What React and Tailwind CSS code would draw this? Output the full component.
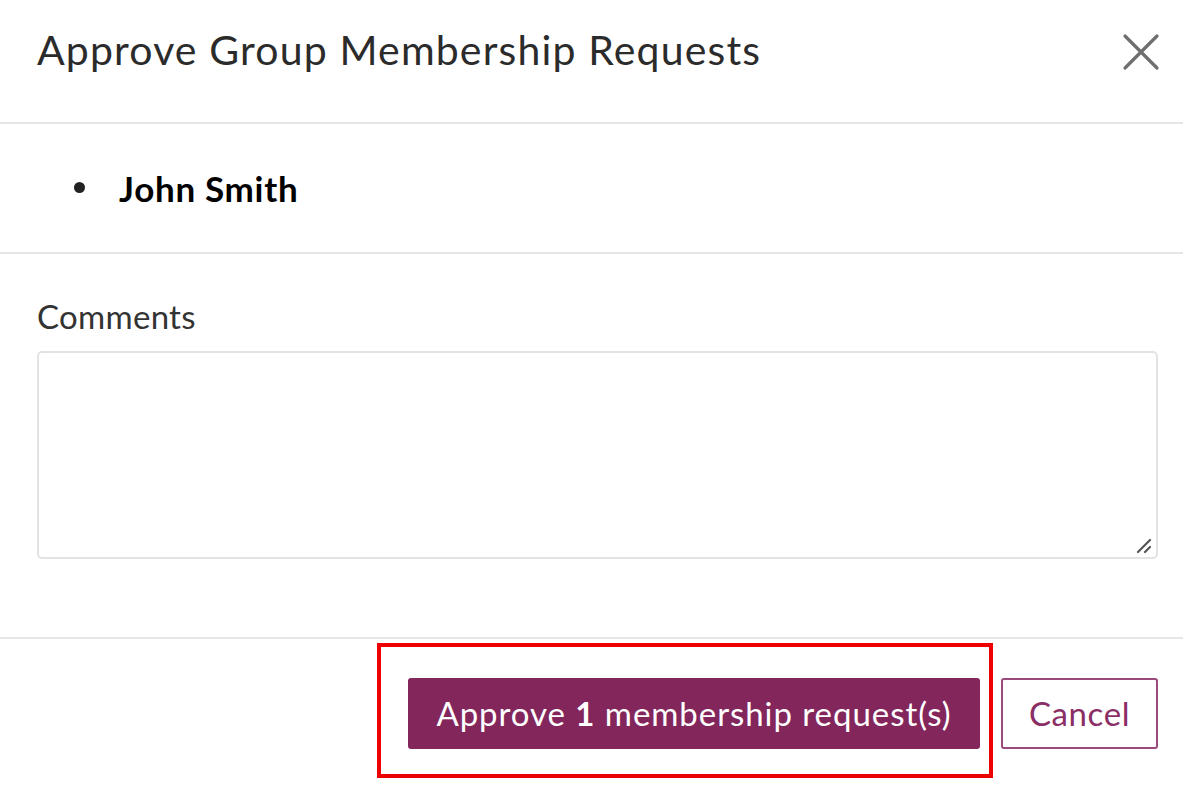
import React from "react";

const CloseIcon = () => (
  <svg width="38" height="38" viewBox="0 0 38 38" fill="none">
    <path d="M3 3 L35 35 M35 3 L3 35" stroke="#6e6e6e" strokeWidth="3.2" strokeLinecap="round" />
  </svg>
);

const ResizeHandle = () => (
  <svg width="16" height="16" viewBox="0 0 16 16" className="absolute right-[4px] bottom-[3px]">
    <path d="M2 14 L14 2 M9 14 L14 9" stroke="#555" strokeWidth="2.2" strokeLinecap="round" />
  </svg>
);

const App = () => {
  return (
    <div className="w-[1195px] h-[807px] bg-white overflow-hidden font-['Lato','Open_Sans',sans-serif] text-[#333]">
      {/* Header */}
      <div className="h-[124px] mr-[12px] border-b-2 border-[#e6e6e6] flex items-start justify-between pl-[37px] pr-[23px]">
        <h1 className="mt-[25px] text-[41px] leading-[50px] font-normal text-[#2b2b2b] tracking-[1.15px]">
          Approve Group Membership Requests
        </h1>
        <button className="mt-[33px]">
          <CloseIcon />
        </button>
      </div>

      {/* Requested members */}
      <div className="h-[130px] mr-[12px] border-b-2 border-[#e6e6e6]">
        <ul className="pl-[74px] pt-[44px]">
          <li className="flex items-center gap-[34px] font-bold text-[35px] leading-[40px] tracking-[0.7px] text-black">
            <span className="w-[11px] h-[11px] rounded-full bg-[#222] -mt-[2px]" />
            John Smith
          </li>
        </ul>
      </div>

      {/* Comments */}
      <div className="h-[385px] mr-[12px] border-b-2 border-[#e6e6e6] pl-[37px] pr-[25px] pt-[42px]">
        <label className="block text-[33px] leading-[40px] tracking-[0.3px] text-[#333]">Comments</label>
        <div className="relative mt-[15px] h-[208px] border-2 border-[#e3e3e3] rounded-[5px]">
          <ResizeHandle />
        </div>
      </div>

      {/* Footer */}
      <div className="flex justify-end items-start pr-[37px] pt-[4px]">
        <div className="border-4 border-[#ee0000] pl-[27px] pr-[9px] pt-[31px] pb-[25px]">
          <button className="w-[572px] h-[71px] bg-[#83265c] rounded-[3px] text-white text-[33px] tracking-[0.95px]">
            Approve <span className="font-bold">1</span> membership request(s)
          </button>
        </div>
        <button className="ml-[8px] mt-[35px] w-[157px] h-[71px] border-2 border-[#9a4a7c] rounded-[3px] text-[#8b2e66] text-[33px] tracking-[0.6px] bg-white">
          Cancel
        </button>
      </div>
    </div>
  );
};

export default App;
